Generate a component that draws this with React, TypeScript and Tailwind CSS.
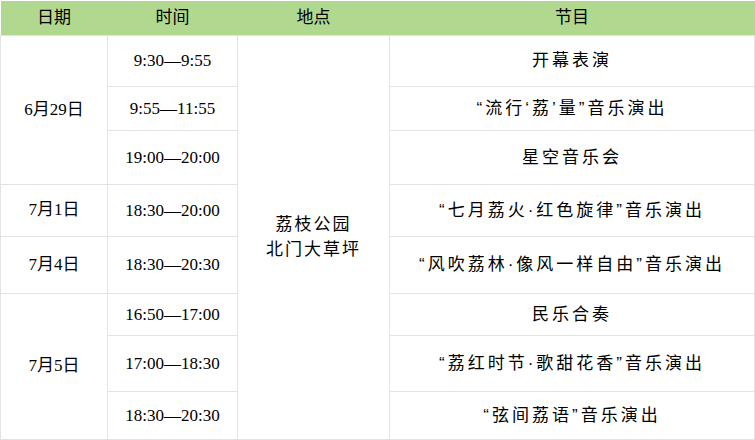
import React from "react";

type Row = {
  date?: { label: string; span: number };
  time: string;
  show: string;
  h: number;
};

const rows: Row[] = [
  { date: { label: "6月29日", span: 3 }, time: "9:30—9:55", show: "开幕表演", h: 51 },
  { time: "9:55—11:55", show: "“流行‘荔’量”音乐演出", h: 44 },
  { time: "19:00—20:00", show: "星空音乐会", h: 54 },
  { date: { label: "7月1日", span: 1 }, time: "18:30—20:00", show: "“七月荔火·红色旋律”音乐演出", h: 52 },
  { date: { label: "7月4日", span: 1 }, time: "18:30—20:30", show: "“风吹荔林·像风一样自由”音乐演出", h: 57 },
  { date: { label: "7月5日", span: 3 }, time: "16:50—17:00", show: "民乐合奏", h: 42 },
  { time: "17:00—18:30", show: "“荔红时节·歌甜花香”音乐演出", h: 56 },
  { time: "18:30—20:30", show: "“弦间荔语”音乐演出", h: 48 },
];

const serif = "font-['Liberation_Serif','Noto_Sans_CJK_SC',serif]";
const sans = "font-['Liberation_Sans','Noto_Sans_CJK_SC',sans-serif]";

export default function App() {
  return (
    <div className="w-[755px] h-[440px] bg-white pt-px">
      <table className="w-[755px] table-fixed border-collapse text-black">
        <colgroup>
          <col className="w-[107px]" />
          <col className="w-[130px]" />
          <col className="w-[152px]" />
          <col />
        </colgroup>
        <thead>
          <tr className={`h-[34px] bg-[#b0d98f] text-[17px] ${sans}`}>
            <th className="font-normal p-0">日期</th>
            <th className="font-normal p-0">时间</th>
            <th className="font-normal p-0">地点</th>
            <th className="font-normal p-0">节目</th>
          </tr>
        </thead>
        <tbody>
          {rows.map((r, i) => (
            <tr key={i} style={{ height: r.h }}>
              {r.date && (
                <td
                  rowSpan={r.date.span}
                  className={`border border-[#e3e3e3] text-center p-0 text-[17px] ${serif}`}
                >
                  {r.date.label}
                </td>
              )}
              <td className={`border border-[#e3e3e3] text-center p-0 pt-px text-[17px] ${serif}`}>
                {r.time}
              </td>
              {i === 0 && (
                <td
                  rowSpan={rows.length}
                  className={`border border-[#e3e3e3] text-center p-0 text-[17px] leading-[25px] tracking-[2px] ${sans}`}
                >
                  荔枝公园
                  <br />
                  北门大草坪
                </td>
              )}
              <td className={`border border-[#e3e3e3] text-center p-0 pt-px text-[17px] tracking-[3px] ${sans}`}>
                {r.show}
              </td>
            </tr>
          ))}
        </tbody>
      </table>
    </div>
  );
}
